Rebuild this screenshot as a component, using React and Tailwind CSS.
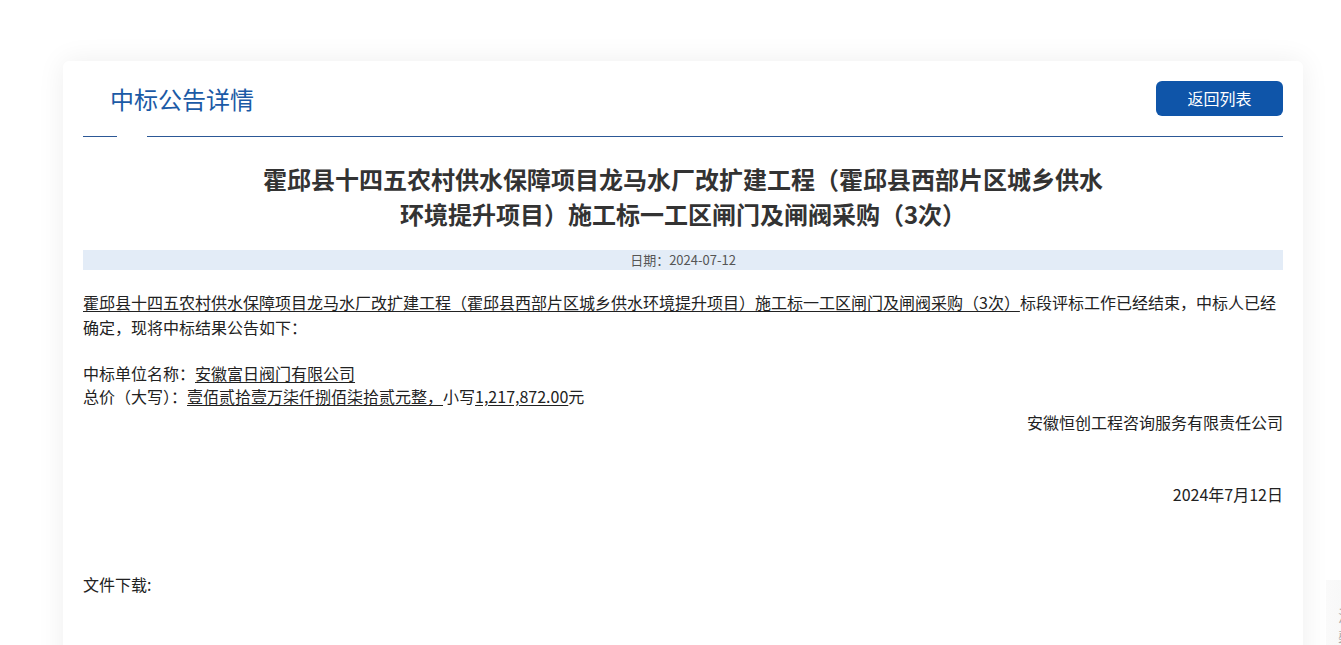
// 中标公告详情ページ
export default function App() {
  const sans = { fontFamily: '"Microsoft YaHei", "Noto Sans CJK SC", sans-serif' };

  return (
    <div className="relative min-h-screen w-full overflow-hidden bg-white" style={sans}>
      {/* 詳細カード */}
      <div className="ml-[63px] mt-[61px] w-[1240px] rounded-[6px] bg-white px-[20px] pb-[80px] shadow-[0_0_28px_rgba(0,0,0,0.07)]">
        {/* ヘッダー */}
        <div className="flex items-center justify-between pt-[19px]">
          <h2 className="ml-[27px] mt-[1px] text-[24px] leading-[35px] text-[#1b5aa6]">中标公告详情</h2>
          <button className="h-[35px] w-[127px] rounded-[6px] bg-[#0f55a9] text-[16px] text-white">返回列表</button>
        </div>
        <div className="mt-[20px] flex items-center">
          <div className="h-px w-[34px] bg-[#2c5896]" />
          <div className="h-px w-[30px]" />
          <div className="h-px flex-1 bg-[#2c5896]" />
        </div>

        {/* タイトル */}
        <h1 className="mx-auto mt-[24px] max-w-[850px] text-center text-[24px] font-bold leading-[35px] text-[#333]">
          霍邱县十四五农村供水保障项目龙马水厂改扩建工程（霍邱县西部片区城乡供水环境提升项目）施工标一工区闸门及闸阀采购（3次）
        </h1>

        {/* 日付 */}
        <div className="mt-[19px] h-[20px] bg-[#e3ecf7] text-center text-[13px] leading-[20px] text-[#555]">
          日期：2024-07-12
        </div>

        {/* 本文 */}
        <div className="text-[16px] text-[#222]" style={{ fontFamily: '"SimSun", "Noto Sans CJK SC", sans-serif' }}>
          <p className="mt-[20px] leading-[25px]">
            <span className="underline underline-offset-2">
              霍邱县十四五农村供水保障项目龙马水厂改扩建工程（霍邱县西部片区城乡供水环境提升项目）施工标一工区闸门及闸阀采购（3次）
            </span>
            标段评标工作已经结束，中标人已经确定，现将中标结果公告如下：
          </p>
          <div className="h-[22px]" />
          <p className="leading-[23px]">
            中标单位名称：<span className="underline underline-offset-2">安徽富日阀门有限公司</span>
          </p>
          <p className="leading-[23px]">
            总价（大写）：<span className="underline underline-offset-2">壹佰贰拾壹万柒仟捌佰柒拾贰元整，</span>小写
            <span className="underline underline-offset-2">1,217,872.00</span>元
          </p>
          <p className="mt-[2px] text-right leading-[25px]">安徽恒创工程咨询服务有限责任公司</p>
          <p className="mt-[47px] text-right leading-[25px]">2024年7月12日</p>
        </div>

        {/* ファイル */}
        <p className="mt-[65px] text-[16px] leading-[24px] text-[#222]">文件下载:</p>
      </div>

      {/* 右端の浮動パネル（見切れ） */}
      <div className="absolute left-[1326px] top-[580px] h-[200px] w-[40px] bg-gradient-to-r from-[#fafafa] to-[#f5f5f5]">
        <div className="ml-[12px] mt-[24px] flex w-[16px] flex-col text-[16px] leading-[22px] text-[#aaa]">
          <span>温</span>
          <span>馨</span>
        </div>
      </div>
    </div>
  );
}
